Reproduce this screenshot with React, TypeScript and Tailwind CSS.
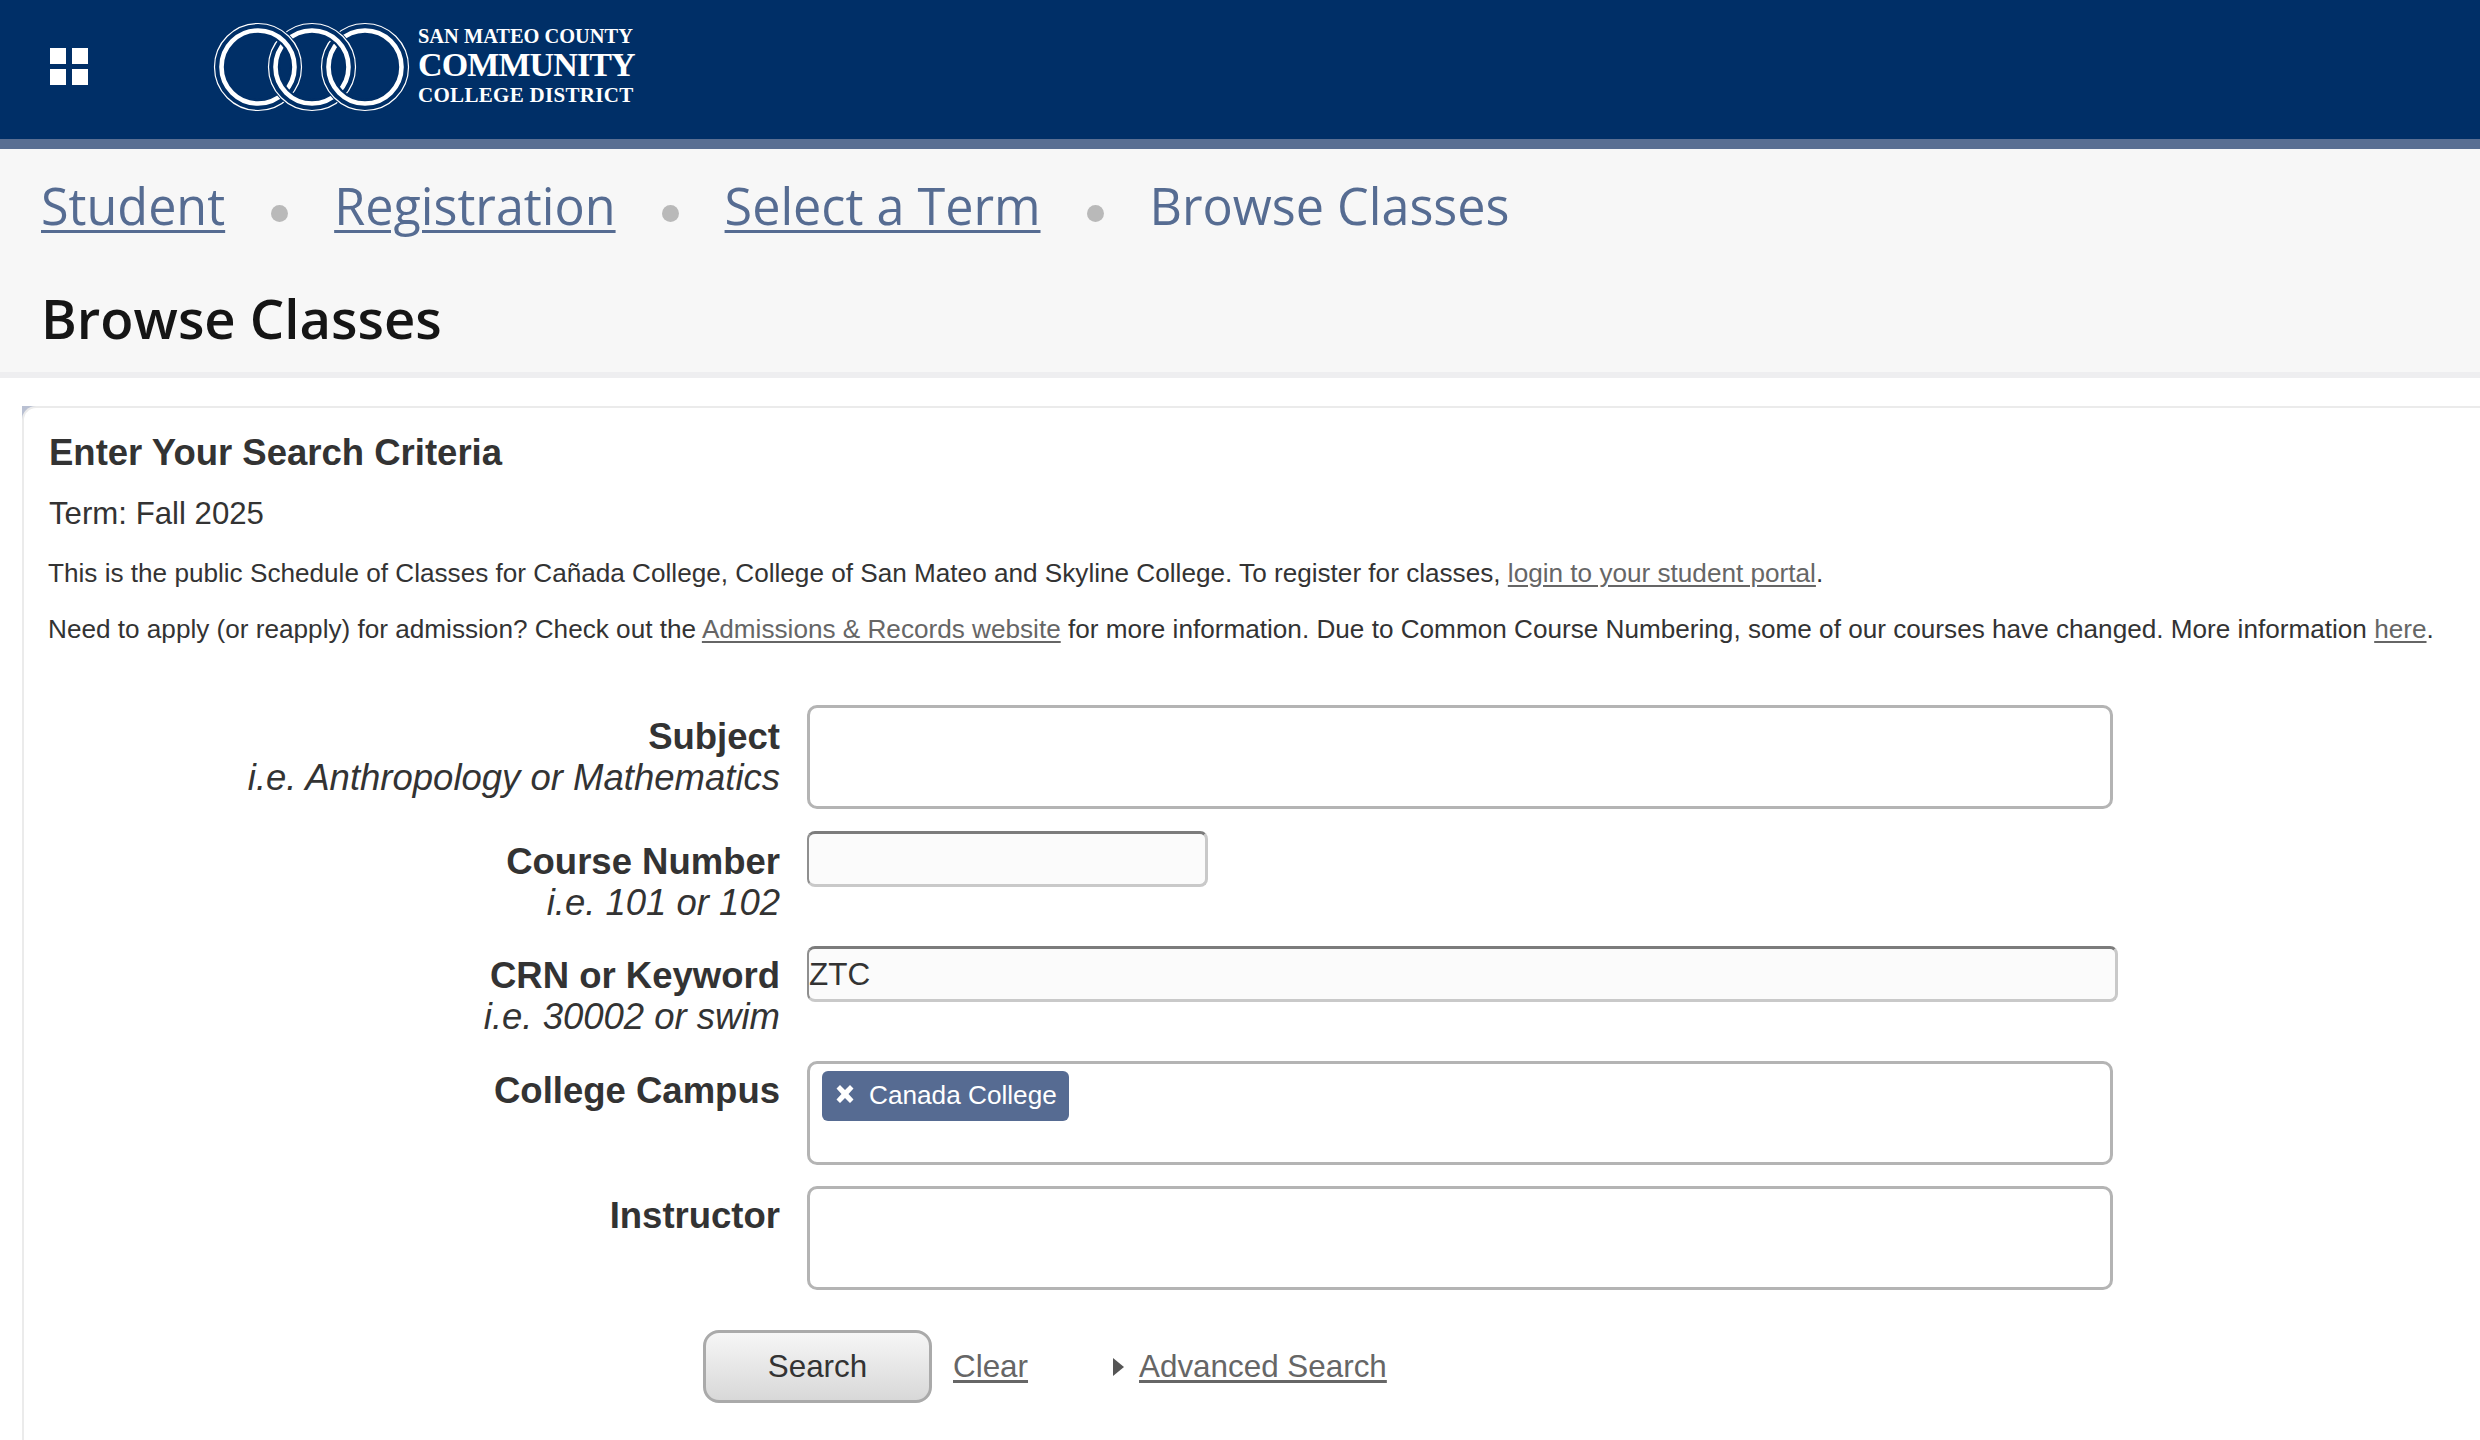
import React from "react";

const NAVY = "#002f67";

const Ring = ({ cx }: { cx: number }) => (
    <g fill="none">
        <circle cx={cx} cy={67} r={38.5} stroke={NAVY} strokeWidth={13} />
        <circle cx={cx} cy={67} r={43.5} stroke="#fff" strokeWidth={1.2} />
        <circle cx={cx} cy={67} r={36.5} stroke="#fff" strokeWidth={4.6} />
    </g>
);

const Rings = () => (
    <svg width={270} height={134} viewBox="205 0 270 134" className="shrink-0">
        <defs>
            <clipPath id="lower">
                <rect x={205} y={67} width={270} height={67} />
            </clipPath>
        </defs>
        <Ring cx={364} />
        <Ring cx={311} />
        <Ring cx={257} />
        <g clipPath="url(#lower)">
            <Ring cx={257} />
            <Ring cx={311} />
            <Ring cx={364} />
        </g>
    </svg>
);

const Logo = () => (
    <div className="flex items-center">
        <Rings />
        <div className="ml-[-58px] mt-[-2px] flex flex-col font-['Liberation_Serif',serif] text-white whitespace-nowrap">
            <div className="text-[20.4px] leading-[22px] font-bold">SAN MATEO COUNTY</div>
            <div className="text-[34px] leading-[36px] font-bold tracking-[-0.9px]">COMMUNITY</div>
            <div className="text-[21px] leading-[24px] font-bold tracking-[0.3px]">COLLEGE DISTRICT</div>
        </div>
    </div>
);

const Crumb = ({ children }: { children: string }) => (
    <a href="#" className="underline decoration-[3px] underline-offset-[5px]">
        {children}
    </a>
);

const Dot = () => <span className="mx-[46px] mt-[14px] h-[17px] w-[17px] rounded-full bg-[#b9b9b9]" />;

type RowProps = {
    label: string;
    hint?: string;
    rowClass: string;
    labelClass: string;
    children: React.ReactNode;
};

const Row = ({ label, hint, rowClass, labelClass, children }: RowProps) => (
    <div className={`flex items-start ${rowClass}`}>
        <div className={`w-[731px] shrink-0 text-right text-[36.5px] leading-[41px] ${labelClass}`}>
            <div className="font-bold">{label}</div>
            {hint && <div className="italic">{hint}</div>}
        </div>
        <div className="ml-[27px]">{children}</div>
    </div>
);

const Box = ({ children }: { children?: React.ReactNode }) => (
    <div className="h-[104px] w-[1306px] rounded-[10px] border-[3px] border-[#b4b4b4] bg-white">{children}</div>
);

const TextInput = ({ value, widthClass }: { value: string; widthClass: string }) => (
    <input
        readOnly
        value={value}
        className={`block h-[56px] rounded-[8px] border-[3px] border-[#c9c9c9] border-t-[#7c7c7c] border-l-2 border-l-[#8f8f8f] bg-[#fbfbfb] pl-0 text-[31.5px] text-[#333] outline-none ${widthClass}`}
    />
);

const PageLink = ({ children }: { children: string }) => (
    <a href="#" className="text-[#666] underline underline-offset-[3px]">
        {children}
    </a>
);

const App = () => {
    return (
        <div className="h-[1440px] w-[2480px] overflow-hidden bg-white font-['Liberation_Sans',Arial,sans-serif] text-[#333]">
            <header className="flex h-[139px] items-center bg-[#002f67]">
                <div className="ml-[50px] grid grid-cols-[16px_16px] grid-rows-[16px_16px] gap-x-[6px] gap-y-[5px] mt-[-6px]">
                    <span className="bg-white" />
                    <span className="bg-white" />
                    <span className="bg-white" />
                    <span className="bg-white" />
                </div>
                <div className="ml-[118px] mt-[-5px]">
                    <Logo />
                </div>
            </header>
            <div className="h-[10px] bg-[#5a6f92]" />

            <div className="border-b-[6px] border-[#eeeef0] bg-[#f7f7f7] px-[41px] pt-[22px] pb-[19px] font-['Open_Sans',sans-serif]">
                <nav className="flex h-[70px] items-center text-[50.3px] leading-[70px] text-[#566c92]">
                    <Crumb>Student</Crumb>
                    <Dot />
                    <Crumb>Registration</Crumb>
                    <Dot />
                    <Crumb>Select a Term</Crumb>
                    <Dot />
                    <span>Browse Classes</span>
                </nav>
                <h1 className="mt-[42px] text-[54.4px] leading-[70px] font-semibold text-[#151515]">Browse Classes</h1>
            </div>

            <main className="ml-[22px] mt-[28px] bg-[#b9c0d2]">
                <div className="h-[1040px] rounded-tl-[14px] border-t-2 border-l-2 border-[#ebebeb] bg-white pl-[25px]">
                    <h2 className="pt-[23px] text-[36.5px] leading-[44px] font-bold">Enter Your Search Criteria</h2>
                    <p className="mt-[19px] text-[31.2px] leading-[40px]">Term: Fall 2025</p>
                    <p className="-ml-px mt-[23px] text-[26.15px] leading-[32px]">
                        This is the public Schedule of Classes for Cañada College, College of San Mateo and Skyline College. To register for classes, <PageLink>login to your student portal</PageLink>.
                    </p>
                    <p className="-ml-px mt-[24px] text-[26.15px] leading-[32px]">
                        Need to apply (or reapply) for admission? Check out the <PageLink>Admissions &amp; Records website</PageLink> for more information. Due to Common Course Numbering, some of our courses have changed. More information <PageLink>here</PageLink>.
                    </p>

                    <form className="mt-[60px]">
                        <Row label="Subject" hint="i.e. Anthropology or Mathematics" rowClass="h-[126px]" labelClass="pt-[11px]">
                            <Box />
                        </Row>
                        <Row label="Course Number" hint="i.e. 101 or 102" rowClass="h-[115px]" labelClass="pt-[10px]">
                            <TextInput value="" widthClass="w-[401px]" />
                        </Row>
                        <Row label="CRN or Keyword" hint="i.e. 30002 or swim" rowClass="h-[115px]" labelClass="pt-[9px]">
                            <TextInput value="ZTC" widthClass="w-[1311px]" />
                        </Row>
                        <Row label="College Campus" rowClass="h-[125px]" labelClass="pt-[9px]">
                            <Box>
                                <div className="mt-[7px] ml-[12px] inline-flex h-[50px] w-[247px] items-center rounded-[6px] bg-[#566b92] pl-[13px] text-[26.2px] whitespace-nowrap text-white">
                                    <svg width={20} height={20} viewBox="0 0 20 20" className="mt-[-4px] shrink-0">
                                        <path d="M1.5 4.5 5 1 10 6 15 1 18.5 4.5 13.5 10 18.5 15.5 15 19 10 14 5 19 1.5 15.5 6.5 10Z" fill="#fff" />
                                    </svg>
                                    <span className="ml-[14px]">Canada College</span>
                                </div>
                            </Box>
                        </Row>
                        <Row label="Instructor" rowClass="h-[144px]" labelClass="pt-[9px]">
                            <Box />
                        </Row>
                        <div className="ml-[654px] flex items-center text-[31.4px]">
                            <button
                                type="button"
                                className="h-[73px] w-[229px] rounded-[16px] border-[3px] border-[#aaa] bg-gradient-to-b from-[#f6f6f6] to-[#d8d8d8] text-[#333]"
                            >
                                Search
                            </button>
                            <span className="ml-[21px]">
                                <PageLink>Clear</PageLink>
                            </span>
                            <span className="ml-[85px] h-0 w-0 border-y-[9px] border-l-[11px] border-y-transparent border-l-[#555]" />
                            <span className="ml-[15px]">
                                <PageLink>Advanced Search</PageLink>
                            </span>
                        </div>
                    </form>
                </div>
            </main>
        </div>
    );
};

export default App;
